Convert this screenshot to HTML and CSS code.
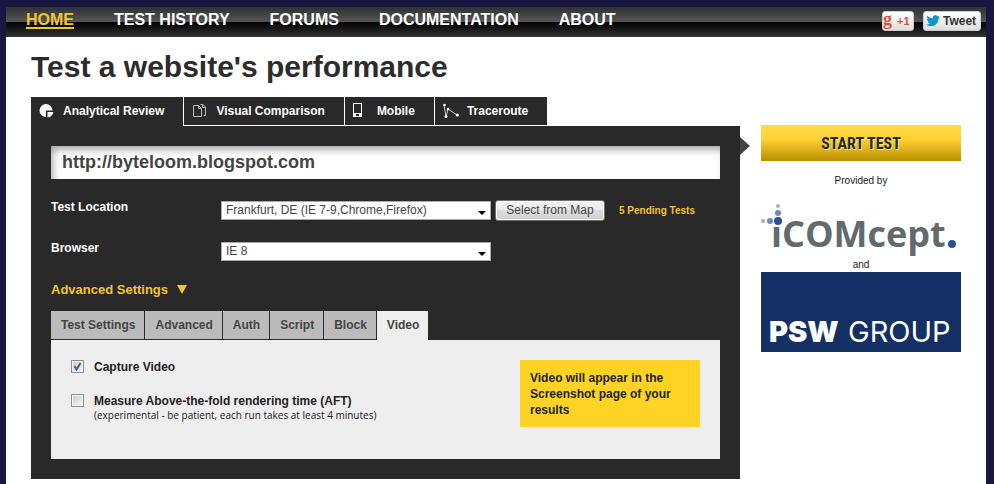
FILE: index.html
```html
<!DOCTYPE html>
<html lang="en">
<head>
<meta charset="utf-8">
<title>Test a website's performance</title>
<link rel="stylesheet" href="styles.css">
</head>
<body>
<div class="page">
  <header class="topbar">
    <nav class="nav">
      <a class="current" href="#">HOME</a>
      <a href="#">TEST HISTORY</a>
      <a href="#">FORUMS</a>
      <a href="#">DOCUMENTATION</a>
      <a href="#">ABOUT</a>
    </nav>
    <div class="social">
      <button class="share plus" type="button"><span class="g">g</span><span>+1</span></button>
      <button class="share tweet" type="button">
        <svg width="14" height="12" viewBox="0 0 14 12" aria-hidden="true"><path fill="#0f96cf" d="M0 9.500C1.500 9.800 3 9.500 4 8.600 2.800 8.300 2 7.600 1.800 6.700L2.900 6.600C1.600 6 .9 5 1 3.700L2 4C1 3 .8 1.800 1.300.6 2.800 2.400 4.600 3.300 6.600 3.500 6.500 1.500 7.800.2 9.400.3 10.300.3 11 .7 11.500 1.200L13.200.7 12.400 2 14 1.900 12.600 3.200C12.500 7.600 9.600 11 5.300 11 3.300 11 1.500 10.500 0 9.500Z"/></svg>
        <span>Tweet</span>
      </button>
    </div>
  </header>
  <main class="content">
    <h1>Test a website's performance</h1>
    <form class="layout">
      <div class="tester">
        <div class="types">
          <a class="type active" href="#">
            <svg width="16" height="16" viewBox="0 0 16 16" aria-hidden="true"><path fill="#fff" d="M7 7.500V1A6.500 6.500 0 1 0 7 14ZM7 1A6.500 6.500 0 0 1 13.500 7.500H7ZM8.500 9H14.300A6 6 0 0 1 8.500 14.500Z"/></svg>
            <span>Analytical Review</span>
          </a>
          <a class="type" href="#">
            <svg width="16" height="16" viewBox="0 0 16 16" aria-hidden="true"><path fill="none" stroke="#bbb" d="M1.500 2.500H6.500L9.500 5.500V13.500H1.500ZM6.500 2.500V5.500H9.500M8.500 1.500H11L13.500 4V12.500H11.500M10.500 1.500V4.500H13.500"/></svg>
            <span>Visual Comparison</span>
          </a>
          <a class="type" href="#">
            <svg width="16" height="16" viewBox="0 0 16 16" aria-hidden="true"><path fill="#fff" fill-rule="evenodd" d="M0 0H9V14H0ZM1 1V10H8V1ZM3 11V13H6V11Z"/></svg>
            <span>Mobile</span>
          </a>
          <a class="type" href="#">
            <svg width="16" height="16" viewBox="0 0 16 16" aria-hidden="true"><path fill="none" stroke="#ccc" d="M1 2 3 14 5 6 14 12"/><g fill="#fff"><circle cx="1.500" cy="2" r="1.300"/><circle cx="3" cy="13.500" r="1.500"/><circle cx="5" cy="6" r="1.300"/><circle cx="14.300" cy="12" r="1.600"/></g></svg>
            <span>Traceroute</span>
          </a>
        </div>
        <div class="panel">
          <input class="url" type="text" value="http://byteloom.blogspot.com" aria-label="Website URL">
          <div class="row">
            <label for="location">Test Location</label>
            <select id="location"><option>Frankfurt, DE (IE 7-9,Chrome,Firefox)</option></select>
            <button class="map" type="button">Select from Map</button>
            <span class="pending">5 Pending Tests</span>
          </div>
          <div class="row">
            <label for="browser">Browser</label>
            <select id="browser"><option>IE 8</option></select>
          </div>
          <a class="advanced" href="#">Advanced Settings
            <svg width="10" height="9" viewBox="0 0 10 9" aria-hidden="true"><path fill="#f0c52e" d="M0 0H10L5 9Z"/></svg>
          </a>
          <div class="tabs">
            <button type="button">Test Settings</button>
            <button type="button">Advanced</button>
            <button type="button">Auth</button>
            <button type="button">Script</button>
            <button type="button">Block</button>
            <button class="active" type="button">Video</button>
          </div>
          <div class="settings">
            <div class="options">
              <div class="option">
                <input type="checkbox" id="video" checked>
                <label for="video">Capture Video</label>
              </div>
              <div class="option">
                <input type="checkbox" id="aft">
                <label for="aft">Measure Above-the-fold rendering time (AFT)<small>(experimental - be patient, each run takes at least 4 minutes)</small></label>
              </div>
            </div>
            <p class="notice">Video will appear in the Screenshot page of your results</p>
          </div>
        </div>
      </div>
      <aside class="side">
        <button class="start" type="submit">START TEST</button>
        <p class="by">Provided by</p>
        <svg class="icomcept" width="200" height="56" viewBox="0 0 200 56" role="img" aria-label="iCOMcept.">
          <g fill="#a2b0cc"><circle cx="2" cy="19" r="2"/><circle cx="17" cy="4" r="2"/></g>
          <g fill="#6f88b4"><circle cx="9" cy="19" r="3"/><circle cx="17" cy="11" r="3"/></g>
          <text x="10" y="45" class="icom-text">ıCOMcept</text>
          <circle cx="17" cy="19" r="4" fill="#2c4f8f"/>
          <circle cx="191" cy="42" r="4" fill="#2c4f8f"/>
        </svg>
        <p class="and">and</p>
        <svg class="psw" width="200" height="80" viewBox="0 0 200 80" role="img" aria-label="PSW GROUP">
          <rect width="200" height="80" fill="#142f64"/>
          <text x="8" y="70" class="psw-bold">PSW</text>
          <text x="87" y="70" class="psw-light">GROUP</text>
        </svg>
      </aside>
    </form>
  </main>
</div>
</body>
</html>
```

FILE: styles.css
```css
* { box-sizing: border-box; }
body {
  margin: 0;
  padding: 7px 8px 0 6px;
  min-height: 100vh;
  display: flex;
  background: #191741;
  color: #222;
  font-family: "Liberation Sans", Arial, sans-serif;
  font-size: 12px;
}
a { color: inherit; text-decoration: none; }
p { margin: 0; }
button, input, select { font-family: inherit; margin: 0; }
.page { flex: 1; background: #fff; }

.topbar {
  height: 30px;
  padding: 0 5px 0 20px;
  display: flex;
  justify-content: space-between;
  align-items: flex-start;
  background: linear-gradient(#303030, #565656 50%, #000 50%, #333);
}
.nav { display: flex; gap: 40px; color: #fff; font-size: 16px; font-weight: bold; line-height: 25px; }
.nav .current { color: #f0c52e; text-decoration: underline; text-decoration-thickness: 2px; text-underline-offset: 2px; }
.social { display: flex; gap: 9px; padding-top: 4px; }
.share {
  height: 20px;
  display: flex;
  align-items: center;
  border: 1px solid #ccc;
  border-radius: 3px;
  background: linear-gradient(#fff, #dedede);
  color: #333;
  font-weight: bold;
}
.plus { width: 32px; padding: 0; gap: 5px; color: #d8533b; font-size: 11px; }
.plus .g { padding-bottom: 4px; font-family: "Liberation Serif", serif; font-size: 18px; line-height: 18px; }
.tweet { width: 58px; padding: 0 2px; gap: 3px; font-size: 12px; }

.content { padding: 12px 25px 0; }
h1 { margin: 0 0 12px; font-size: 30px; line-height: 36px; color: #2c2c2c; }
.layout { display: flex; gap: 21px; align-items: flex-start; }
.tester { flex: 1; min-width: 0; }
.types { display: flex; gap: 1px; }
.type {
  height: 28px;
  margin-bottom: 1px;
  padding: 0 19px 0 8px;
  display: flex;
  align-items: center;
  gap: 8px;
  background: #292929;
  color: #fff;
  font-weight: bold;
}
.type.active { height: 29px; margin-bottom: 0; padding-bottom: 1px; }
.panel { position: relative; padding: 20px; background: #292929; }
.panel::after {
  content: "";
  position: absolute;
  left: 100%;
  top: 11px;
  border: solid transparent;
  border-width: 9px 0 9px 10px;
  border-left-color: #444;
}
.url {
  display: block;
  width: 100%;
  height: 33px;
  margin-bottom: 20px;
  padding: 0 11px;
  border: 0;
  background: #fff;
  box-shadow: inset 3px 5px 8px -2px #999;
  color: #444;
  font-size: 18px;
  font-weight: bold;
}
.row { display: flex; align-items: center; height: 22px; margin-bottom: 19px; color: #fff; }
.row label { width: 170px; margin-bottom: 6px; font-weight: bold; }
.row select {
  appearance: none;
  width: 270px;
  height: 19px;
  padding: 0 4px;
  border: 1px solid #aaa;
  border-radius: 0;
  background: #fff url("data:image/svg+xml,%3Csvg xmlns='http://www.w3.org/2000/svg' width='8' height='4'%3E%3Cpath d='M0 0H8L4 4Z'/%3E%3C/svg%3E") no-repeat right 4px top 9px;
  color: #444;
  font-size: 12px;
}
.map {
  height: 21px;
  width: 110px;
  margin-left: 4px;
  padding: 0;
  border: 1px solid #707070;
  border-radius: 3px;
  background: linear-gradient(#f2f2f2, #ebebeb 50%, #ddd 50%, #cfcfcf);
  box-shadow: inset 0 0 0 1px #fff;
  color: #444;
  font-size: 12px;
}
.pending { margin-left: 14px; color: #f0c52e; font-size: 10px; font-weight: bold; }
.advanced {
  display: flex;
  align-items: center;
  gap: 9px;
  height: 16px;
  margin-bottom: 14px;
  color: #f0c52e;
  font-size: 13px;
  font-weight: bold;
}
.tabs { display: flex; gap: 1px; }
.tabs button {
  height: 28px;
  margin-bottom: 1px;
  padding: 0 9px 0 10px;
  border: 0;
  background: #bbb;
  color: #444;
  font-size: 12px;
  font-weight: bold;
}
.tabs .active { height: 29px; margin-bottom: 0; padding-bottom: 1px; background: #eee; }
.settings {
  min-height: 119px;
  padding: 20px;
  display: flex;
  justify-content: space-between;
  align-items: flex-start;
  background: #eee;
}
.options { display: flex; flex-direction: column; gap: 20px; }
.option { display: flex; align-items: flex-start; gap: 10px; line-height: 14px; }
.option input {
  appearance: none;
  width: 13px;
  height: 13px;
  border: 1px solid #8e8f8f;
  background: linear-gradient(135deg, #ccc, #f6f6f6);
  box-shadow: inset 0 0 0 1px #f4f4f4;
}
.option input:checked {
  background: url("data:image/svg+xml,%3Csvg xmlns='http://www.w3.org/2000/svg' width='11' height='11'%3E%3Cpath d='M2.500 5L4.500 8.500 8.500 2' fill='none' stroke='%234a5f97' stroke-width='2'/%3E%3C/svg%3E"), linear-gradient(135deg, #ccc, #f6f6f6);
}
.option label { font-weight: bold; }
.option small { display: block; font-family: "Open Sans", sans-serif; font-size: 10px; font-weight: normal; }
.notice {
  width: 180px;
  padding: 10px 10px 9px;
  background: #ffd324;
  font-weight: bold;
  line-height: 16px;
}

.side { width: 200px; padding-top: 28px; text-align: center; font-size: 10px; line-height: 14px; }
.start {
  display: block;
  width: 100%;
  height: 36px;
  margin-bottom: 13px;
  border: 0;
  background: linear-gradient(#ffdb4c, #ffd033 40%, #b88f00);
  color: #292929;
  font-family: "Liberation Sans Narrow", "Roboto Condensed", Roboto, sans-serif;
  font-size: 16px;
  font-weight: bold;
  text-shadow: 1px 1px 1px #ffea99;
}
.side svg { display: block; }
.icomcept { margin-top: 14px; }
.icom-text { fill: #626a6e; font: bold 36px "Open Sans", sans-serif; }
.psw-bold { fill: #fff; font: 900 29px Inter, sans-serif; }
.psw-light { fill: #fff; font: 400 29px Inter, sans-serif; }
```
